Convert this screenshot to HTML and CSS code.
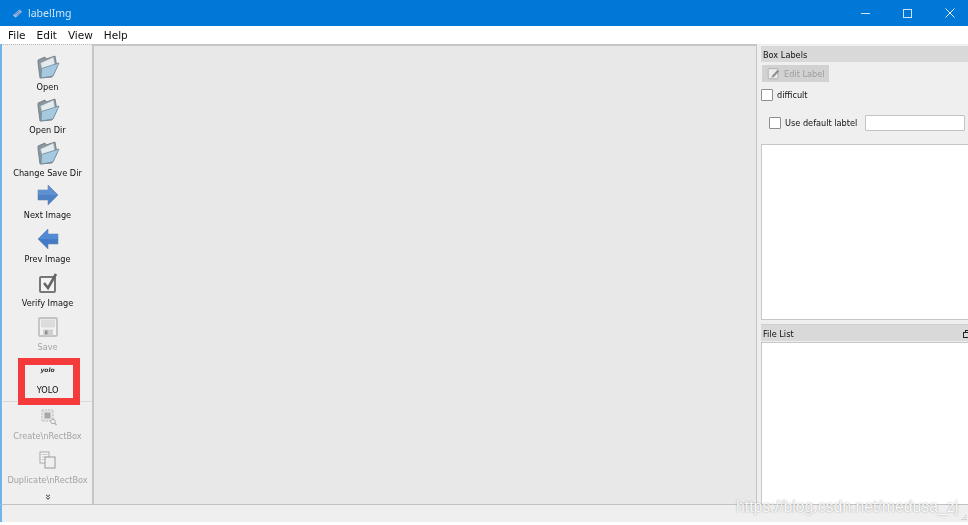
FILE: index.html
```html
<!DOCTYPE html>
<html lang="en">
<head>
<meta charset="utf-8">
<title>labelImg</title>
<link rel="stylesheet" href="styles.css">
</head>
<body>
<svg class="defs" width="0" height="0" aria-hidden="true">
  <symbol id="folder" viewBox="0 0 24 24">
    <path d="M2 8 L4 23 L16 22 L21 12 L19 1 L10 4 L9 2 L2 5 Z" fill="#8a979f" stroke="#69767f" stroke-width=".8"/>
    <path d="M4.5 8 L17.5 2 L19 10 L6 15 Z" fill="#e4eaee" stroke="#9aa6ae" stroke-width=".6"/>
    <path d="M5.5 13.5 L23 8 L17 21 L5 23 Z" fill="#a5c9df" stroke="#6f8898" stroke-width=".8"/>
  </symbol>
  <symbol id="next" viewBox="0 0 24 24">
    <path d="M2 7 H12 V2 L22 12 L12 22 V17 H2 Z" fill="#4d80c4" stroke="#6d87a8" stroke-width=".6"/>
    <path d="M2 7 H12 V2 L22 12 H2 Z" fill="#5e90d2"/>
  </symbol>
  <symbol id="prev" viewBox="0 0 24 24">
    <path d="M22 7 H12 V2 L2 12 L12 22 V17 H22 Z" fill="#437bc6" stroke="#6d87a8" stroke-width=".6"/>
    <path d="M22 7 H12 V2 L2 12 H22 Z" fill="#528bd4"/>
  </symbol>
  <symbol id="verify" viewBox="0 0 24 24">
    <rect x="4" y="6" width="15" height="15" rx="1" fill="#f4f4f4" stroke="#777" stroke-width="2"/>
    <path d="M8 12 L12 17 L20 3" fill="none" stroke="#666" stroke-width="2.6"/>
  </symbol>
  <symbol id="save" viewBox="0 0 24 24">
    <rect x="3" y="3" width="18" height="18" rx="1" fill="#f2f2f2" stroke="#b5b5b5" stroke-width="1.4"/>
    <rect x="5" y="4.5" width="14" height="8" fill="#dcdcdc"/>
    <rect x="7" y="14.5" width="10" height="6" fill="#cfcfcf"/>
    <rect x="9" y="15.5" width="2.5" height="4" fill="#8f8f8f"/>
  </symbol>
  <symbol id="create" viewBox="0 0 24 24">
    <rect x="6" y="6" width="11" height="11" fill="#e6e6e6" stroke="#bbb" stroke-width="1" stroke-dasharray="2 1"/>
    <rect x="8.5" y="8.5" width="6" height="6" fill="#a8a8a8"/>
    <circle cx="17" cy="17.5" r="2.2" fill="#f4f4f4" stroke="#aaa" stroke-width="1"/>
    <path d="M18.5 19 L20.5 21" stroke="#aaa" stroke-width="1.2"/>
  </symbol>
  <symbol id="duplicate" viewBox="0 0 24 24">
    <rect x="4" y="4" width="9" height="11" fill="#f4f4f4" stroke="#aaa"/>
    <path d="M5.5 6.5 H11.5 M5.5 9 H11.5 M5.5 11.5 H11.5" stroke="#ccc"/>
    <rect x="9" y="9" width="10" height="11" fill="#f0f0f0" stroke="#999"/>
  </symbol>
  <symbol id="edit" viewBox="0 0 16 16">
    <rect x="1.5" y="2" width="12" height="12.5" rx="1" fill="#ececec" stroke="#a8a8a8"/>
    <path d="M6 11 L13 3.5 L15 5.5 L8 12.5 L5.5 13 Z" fill="#8f8f8f"/>
  </symbol>
</svg>

<div class="page">
<div class="window">
  <header class="titlebar">
    <div class="title-left">
      <svg class="app-icon" viewBox="0 0 12 12" aria-hidden="true">
        <path d="M1 8 L8 1.5 L11 4 L4 10.5 Z" fill="#9fc0e8"/>
        <path d="M3 7.5 L8 3 M5 8.5 L9 4.5" stroke="#3d5f96" stroke-width=".8"/>
      </svg>
      <span class="app-name">labelImg</span>
    </div>
    <div class="win-controls">
      <span class="win-min"></span>
      <span class="win-max"></span>
      <svg class="win-close" viewBox="0 0 10 10" aria-hidden="true"><path d="M.5 .5 L9.5 9.5 M9.5 .5 L.5 9.5" stroke="#e6f1fb" stroke-width="1"/></svg>
    </div>
  </header>

  <nav class="menubar">
    <span>File</span><span>Edit</span><span>View</span><span>Help</span>
  </nav>

  <main class="main">
    <aside class="toolbar">
      <div class="tool"><svg class="tool-icon"><use href="#folder"/></svg><span>Open</span></div>
      <div class="tool"><svg class="tool-icon"><use href="#folder"/></svg><span>Open Dir</span></div>
      <div class="tool tool-short"><svg class="tool-icon"><use href="#folder"/></svg><span>Change Save Dir</span></div>
      <div class="tool tool-tall"><svg class="tool-icon"><use href="#next"/></svg><span>Next Image</span></div>
      <div class="tool tool-tall"><svg class="tool-icon"><use href="#prev"/></svg><span>Prev Image</span></div>
      <div class="tool tool-tall"><svg class="tool-icon"><use href="#verify"/></svg><span>Verify Image</span></div>
      <div class="tool disabled"><svg class="tool-icon"><use href="#save"/></svg><span>Save</span></div>
      <div class="tool tool-yolo">
        <span class="yolo-icon">yolo</span><span>YOLO</span>
        <div class="highlight"></div>
      </div>
      <div class="tool-sep"></div>
      <div class="tool disabled tool-after-sep"><svg class="tool-icon"><use href="#create"/></svg><span>Create\nRectBox</span></div>
      <div class="tool disabled tool-tall"><svg class="tool-icon"><use href="#duplicate"/></svg><span>Duplicate\nRectBox</span></div>
      <svg class="more" viewBox="0 0 6 6" aria-hidden="true"><path d="M1 .8 L3 2.6 L5 .8 M1 3.4 L3 5.2 L5 3.4" fill="none" stroke="#333" stroke-width="1"/></svg>
    </aside>

    <section class="canvas"></section>

    <aside class="dock">
      <div class="dock-title">Box Labels</div>
      <div class="edit-btn"><svg class="edit-icon"><use href="#edit"/></svg><span>Edit Label</span></div>
      <label class="check-row"><span class="checkbox"></span><span>difficult</span></label>
      <div class="default-row">
        <span class="checkbox"></span>
        <span class="default-text">Use default labtel</span>
        <span class="text-input"></span>
      </div>
      <div class="list list-labels"></div>
      <div class="dock-title dock-title-files">
        <span>File List</span>
        <svg class="float-icon" viewBox="0 0 8 8" aria-hidden="true">
          <rect x="2.5" y=".5" width="5" height="5" fill="none" stroke="#222"/>
          <rect x=".5" y="2.5" width="5" height="5" fill="#d9d9d9" stroke="#222"/>
        </svg>
      </div>
      <div class="list list-files"></div>
    </aside>
  </main>

  <footer class="statusbar">
    <svg class="grip" viewBox="0 0 6 6" aria-hidden="true"><path d="M5 1 V2 M3 3 V4 M5 3 V4 M1 5 V6 M3 5 V6 M5 5 V6" stroke="#b5b5b5"/></svg>
  </footer>
  <div class="bottom-gap"></div>
</div>
<div class="watermark">https://blog.csdn.net/medusa_zj</div>
</div>
</body>
</html>
```

FILE: styles.css
```css
* { box-sizing: border-box; }

html, body {
  margin: 0;
  padding: 0;
  background: #fff;
  overflow: hidden;
}

.defs { position: absolute; }

.page {
  position: relative;
  width: 968px;
  height: 525px;
  overflow: hidden;
}

.window {
  width: 968px;
  height: 525px;
  display: flex;
  flex-direction: column;
  overflow: hidden;
  font-family: "DejaVu Sans", sans-serif;
  font-size: 8.2px;
  color: #111;
  filter: blur(0.4px);
}

/* Title bar */
.titlebar {
  height: 26px;
  flex: none;
  display: flex;
  justify-content: space-between;
  align-items: center;
  background: #0078d7;
  padding: 0 13px 0 12px;
}
.title-left { display: flex; align-items: center; gap: 5px; }
.app-icon { width: 11px; height: 11px; }
.app-name {
  font-family: "Noto Sans", sans-serif;
  font-size: 10.5px;
  color: #cfe4f7;
}
.win-controls { display: flex; align-items: center; gap: 33px; }
.win-min { width: 9px; height: 1px; background: #cfe4f7; }
.win-max { width: 9px; height: 9px; border: 1px solid #cfe4f7; }
.win-close { width: 10px; height: 10px; }

/* Menu */
.menubar {
  height: 18px;
  flex: none;
  display: flex;
  align-items: center;
  gap: 11px;
  padding-left: 8px;
  background: #fff;
  font-size: 10.5px;
  color: #111;
}

/* Main row */
.main {
  flex: 1;
  min-height: 0;
  display: flex;
  background: #efefef;
  border-left: 2px solid #6fb4ea;
}

.toolbar {
  width: 90px;
  flex: none;
  display: flex;
  flex-direction: column;
  align-items: center;
  padding-top: 10px;
  border-top: 1px dotted #bdbdbd;
  border-left: 1px solid #f4f4f4;
}
.tool {
  position: relative;
  height: 43px;
  width: 100%;
  flex: none;
  display: flex;
  flex-direction: column;
  align-items: center;
  color: #111;
  line-height: 12px;
  white-space: nowrap;
}
.tool-short { height: 42px; }
.tool-tall { height: 44px; }
.tool-icon { width: 24px; height: 24px; flex: none; margin-bottom: 2px; }
.tool.disabled { color: #a3a3a3; }

.tool-yolo { height: 43px; padding-top: 7px; }
.yolo-icon {
  height: 19px;
  font-size: 6px;
  font-weight: bold;
  font-style: italic;
  line-height: 10px;
  color: #333;
}
.highlight {
  position: absolute;
  left: 15px;
  top: 0;
  width: 62px;
  height: 47px;
  border: 7px solid #f43a3a;
}
.tool-sep {
  flex: none;
  width: 100%;
  height: 1px;
  margin-bottom: 2px;
  background: #d9d9d9;
}
.tool-after-sep { height: 44px; }
.more {
  width: 6px;
  height: 6px;
  flex: none;
  margin-top: 2px;
}

.canvas {
  flex: 1;
  min-width: 0;
  background: #e8e8e8;
  border: 1px solid #c6c6c6;
  border-width: 2px 1px 0 2px;
}

/* Right dock */
.dock {
  width: 211px;
  flex: none;
  display: flex;
  flex-direction: column;
  padding: 2px 0 0 4px;
}
.dock-title {
  height: 16px;
  flex: none;
  display: flex;
  align-items: center;
  justify-content: space-between;
  padding: 2px 0 0 2px;
  background: #d9d9d9;
  line-height: 14px;
}
.float-icon { width: 8px; height: 8px; margin-right: -3px; }
.edit-btn {
  flex: none;
  width: 67px;
  height: 17px;
  margin: 3px 0 0 1px;
  display: flex;
  align-items: center;
  gap: 4px;
  padding-left: 5px;
  background: #d2d2d2;
  color: #9d9d9d;
}
.edit-icon { width: 13px; height: 13px; flex: none; }
.check-row {
  flex: none;
  display: flex;
  align-items: center;
  gap: 4px;
  height: 12px;
  margin-top: 7px;
}
.checkbox {
  width: 12px;
  height: 12px;
  flex: none;
  background: #fff;
  border: 1px solid #8e8e8e;
  border-radius: 1px;
}
.default-row {
  flex: none;
  display: flex;
  align-items: center;
  height: 16px;
  margin-top: 14px;
  padding-left: 8px;
}
.default-text { margin-left: 4px; width: 80px; white-space: nowrap; }
.text-input {
  width: 100px;
  height: 16px;
  background: #fff;
  border: 1px solid #c4c4c4;
  border-radius: 1px;
}
.list {
  flex: none;
  background: #fff;
  border: 1px solid #c6c6c6;
  border-right: 0;
}
.list-labels { height: 176px; margin-top: 13px; }
.dock-title-files { margin-top: 4px; height: 17px; border-top: 1px solid #cfcfcf; }
.list-files { flex: 1; border-bottom: 0; margin-top: 1px; }

/* Status bar */
.statusbar {
  height: 18px;
  flex: none;
  display: flex;
  justify-content: flex-end;
  align-items: flex-end;
  padding: 0 1px 2px 0;
  background: #efefef;
  border-top: 1px solid #c2c2c2;
  border-left: 2px solid #6fb4ea;
}
.grip { width: 6px; height: 6px; }
.bottom-gap { height: 3px; flex: none; background: #fff; }

.watermark {
  position: absolute;
  left: 736px;
  top: 498px;
  font-family: "Liberation Sans", sans-serif;
  font-size: 15.8px;
  line-height: 18px;
  white-space: nowrap;
  color: rgba(255, 255, 255, 0.95);
  text-shadow: 0 0 1.5px rgba(110, 110, 110, 0.75);
}
```
